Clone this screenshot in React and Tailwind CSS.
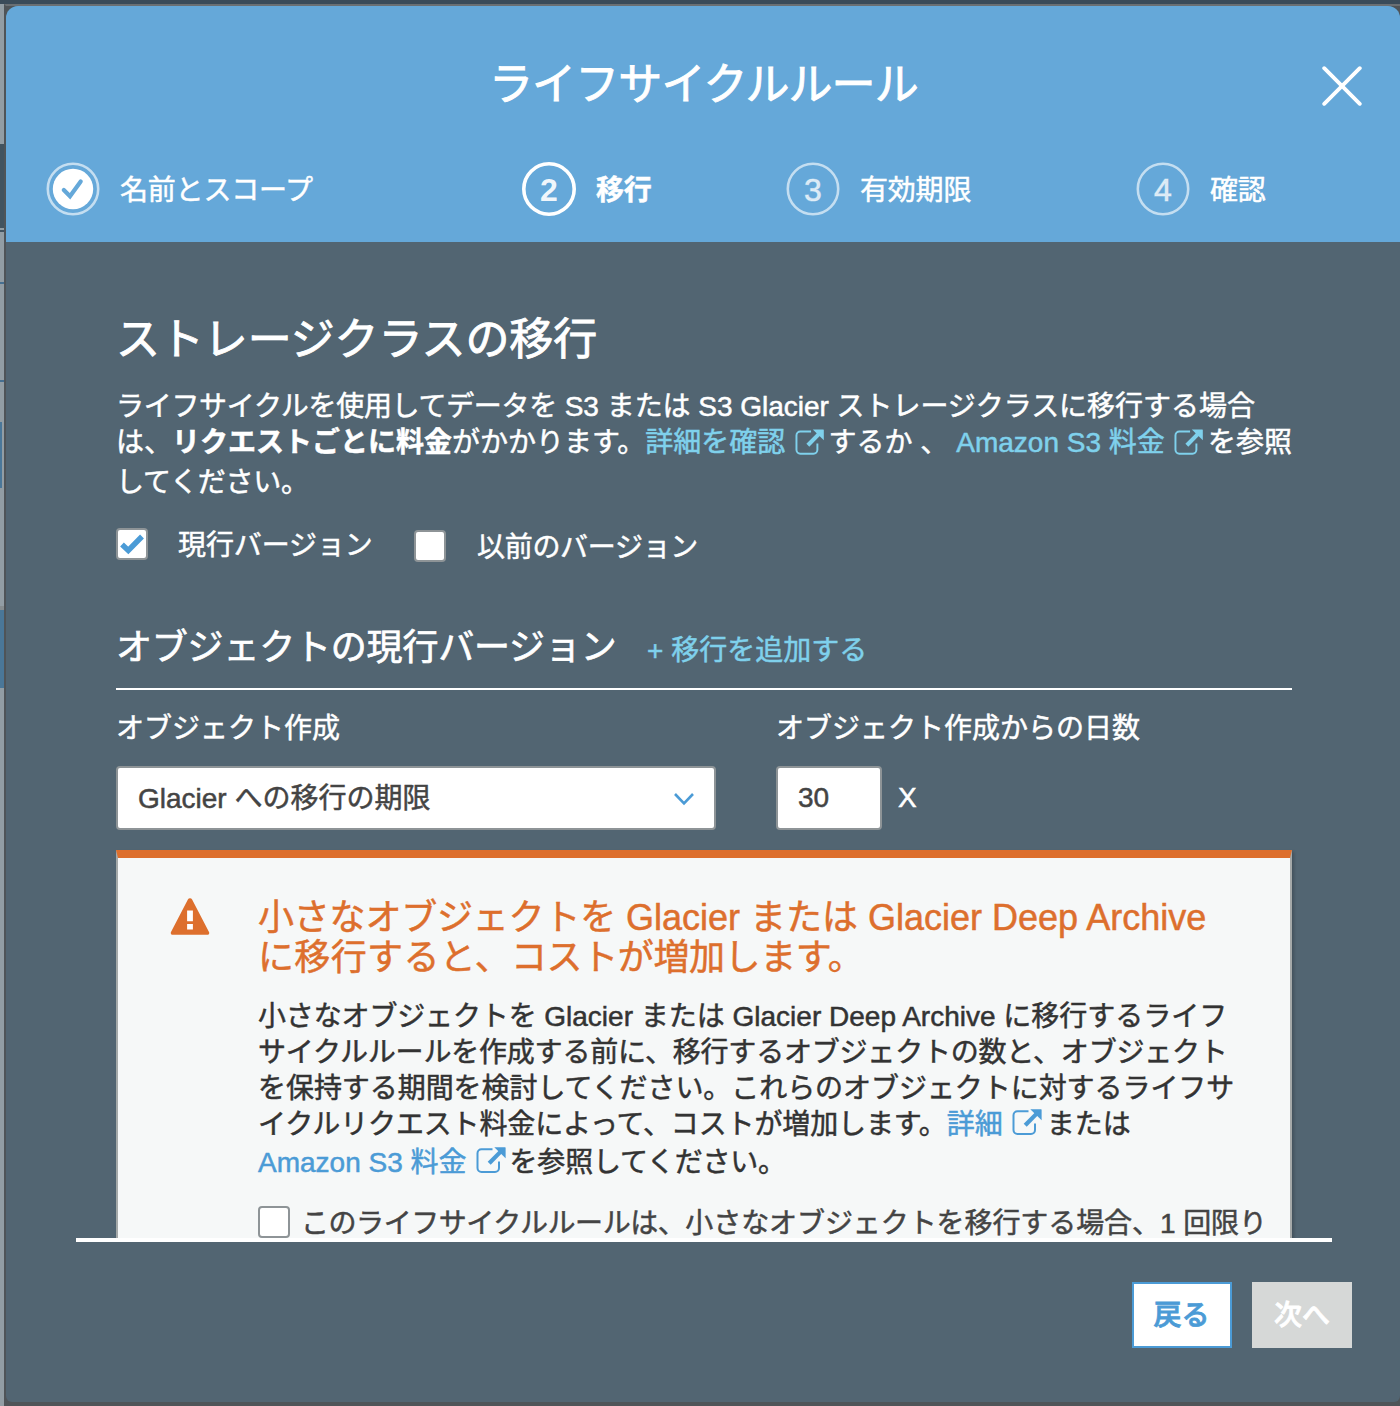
import React from "react";

function ExternalIcon({ className }) {
  return (
    <svg viewBox="0 0 30 28" className={className} fill="none" stroke="currentColor">
      <path d="M16.5 3.3H5.5a4 4 0 0 0-4 4V22a4 4 0 0 0 4 4H19a4 4 0 0 0 4-4v-6.5" strokeWidth="2" />
      <path d="M13.2 17.3 24.7 5.6" strokeWidth="4.2" strokeLinecap="butt" />
      <path d="M18.3 1.2H29a.6.6 0 0 1 .6.6v10.4z" fill="currentColor" stroke="none" />
    </svg>
  );
}

function Step({ number, label, active, done, className }) {
  return (
    <div className={`flex h-[54px] items-center ${className}`}>
      <svg viewBox="0 0 54 54" className="h-[54px] w-[54px] shrink-0">
        <circle cx="27" cy="27" r="25.2" fill="none" stroke="#fff" strokeWidth={active ? 3.6 : 2.6} strokeOpacity={active ? 1 : 0.62} />
        {done ? (
          <>
            <circle cx="27" cy="27" r="20.2" fill="#fff" />
            <path d="M17.8 28l6.2 6.3 10.7-14.8" fill="none" stroke="#65a8d9" strokeWidth="4.2" strokeLinecap="round" />
          </>
        ) : (
          <text
            x="27"
            y="38.9"
            textAnchor="middle"
            fontSize="32"
            fontWeight={active ? 700 : 400}
            fontFamily="'Liberation Sans', sans-serif"
            fill="#fff"
            fillOpacity={active ? 0.92 : 0.75}
            stroke="#fff"
            strokeOpacity={active ? 0 : 0.4}
            strokeWidth="1.1"
          >
            {number}
          </text>
        )}
      </svg>
      <span className={`mt-[3px] ml-5 whitespace-nowrap text-[28px] leading-[54px] tracking-[-0.2px] ${active ? "font-bold" : ""}`}>{label}</span>
    </div>
  );
}

function Backdrop() {
  return (
    <div className="flex w-1 shrink-0 flex-col bg-[#929da4]">
      <div className="mt-[140px] h-[84px] bg-[#42535f]" />
      <div className="mt-[2px] h-[2px] bg-[#42535f]" />
      <div className="mt-[50px] h-[2px] bg-[#466f90]" />
      <div className="mt-[96px] h-[2px] bg-[#466f90]" />
      <div className="mt-[40px] h-[66px] w-[2px] bg-[#4a7799]" />
      <div className="mt-[118px] h-[4px] bg-[#868d90]" />
      <div className="h-[78px] bg-[#4a7798]" />
    </div>
  );
}

export default function App() {
  return (
    <div className="flex h-[1406px] w-[1400px] flex-col overflow-hidden bg-[#5a646b] font-['Liberation_Sans','Noto_Sans_CJK_JP',sans-serif] text-white [-webkit-text-stroke:0.5px]">
      <div className="h-1 shrink-0 bg-[#3a4b59]" />
      <div className="flex min-h-0 flex-1">
        <Backdrop />
        <div className="flex w-[1396px] flex-col border-t-2 border-b-4 border-l-2 border-t-[#6a6f73] border-b-[#4f5458] border-l-[#4f5458] bg-[#4f5458]">
          <div className="flex min-h-0 flex-1 flex-col overflow-hidden rounded-t-[12px] rounded-b-[6px] bg-[#526572]">
            <header className="h-[236px] shrink-0 bg-[#65a8d9]">
              <div className="flex h-[156px] items-center pl-[483px]">
                <h1 className="mt-px w-[833px] whitespace-nowrap text-[44px] leading-[60px] tracking-[-0.9px] [-webkit-text-stroke:0.9px]">ライフサイクルルール</h1>
                <svg viewBox="0 0 40 40" className="mt-1 h-10 w-10" stroke="#fff" strokeWidth="3.8" strokeLinecap="round">
                  <path d="M2.2 2.2l35.6 35.6M37.8 2.2L2.2 37.8" />
                </svg>
              </div>
              <div className="flex">
                <Step done label="名前とスコープ" className="ml-10 w-[476px]" />
                <Step number="2" active label="移行" className="w-[264px]" />
                <Step number="3" label="有効期限" className="w-[350px]" />
                <Step number="4" label="確認" className="" />
              </div>
            </header>

            <main className="h-[996px] shrink-0 overflow-hidden pr-[108px] pl-[110px] pt-[68px]">
              <h2 className="whitespace-nowrap text-[44px] leading-[60px] tracking-[-0.1px] [-webkit-text-stroke:0.9px]">ストレージクラスの移行</h2>
              <div className="mt-[19px] whitespace-nowrap text-[28px]">
                <p className="leading-[36px]">
                  <span className="tracking-[-0.3px]">ライフサイクルを使用してデータを</span>
                  <span className="tracking-[-0.03px]"> S3 または S3 Glacier ストレージクラスに移行する場合</span>
                </p>
                <p className="flex leading-[36px]">
                  <span>は、</span>
                  <b>リクエストごとに料金</b>
                  <span>がかかります。</span>
                  <a className="text-[#7fd1ec]">詳細を確認</a>
                  <ExternalIcon className="mt-[3px] ml-[10px] h-7 w-[30px] text-[#7fd1ec]" />
                  <span className="ml-1">するか 、 </span>
                  <a className="ml-2 text-[#7fd1ec]">Amazon S3 料金</a>
                  <ExternalIcon className="mt-[3px] ml-[9px] h-7 w-[30px] text-[#7fd1ec]" />
                  <span className="ml-[5px]">を参照</span>
                </p>
                <p className="mt-1 leading-[36px] tracking-[-0.2px]">してください。</p>
              </div>

              <div className="mt-[25px] flex h-[40px] items-start whitespace-nowrap text-[28px] leading-[36px]">
                <span className="mt-[2px] flex h-8 w-8 items-center justify-center rounded-[4px] border-2 border-[#8e9497] bg-white">
                  <svg viewBox="0 0 24 22" className="h-[22px] w-6" fill="none" stroke="#4b9bd6" strokeWidth="5.4">
                    <path d="M2 11.5l6.3 6L22 3.5" />
                  </svg>
                </span>
                <span className="mt-[2px] ml-[30px] w-[236px] tracking-[-0.1px]">現行バージョン</span>
                <span className="mt-[4px] h-8 w-8 rounded-[4px] border-2 border-[#8e9497] bg-white" />
                <span className="mt-[4px] ml-[31px] tracking-[-0.3px]">以前のバージョン</span>
              </div>

              <div className="mt-[40px] flex h-[84px] items-start whitespace-nowrap border-b-2 border-white pt-5">
                <h3 className="w-[531px] text-[36px] leading-[44px] tracking-[-0.2px] [-webkit-text-stroke:0.7px]">オブジェクトの現行バージョン</h3>
                <a className="mt-[3px] text-[28px] leading-[44px] text-[#7fd1ec]">+ 移行を追加する</a>
              </div>

              <div className="mt-[19px] flex whitespace-nowrap text-[28px] leading-[40px]">
                <div className="w-[660px]">
                  <div>オブジェクト作成</div>
                  <div className="mt-[17px] flex h-16 w-[600px] items-center justify-between rounded-[4px] border-2 border-[#8e9497] bg-white pr-5 pl-5 text-[#444]">
                    <span className="mt-px">Glacier への移行の期限</span>
                    <svg viewBox="0 0 20 14" className="mt-[2px] h-[14px] w-5" fill="none" stroke="#4b9bd6" strokeWidth="2.6">
                      <path d="M1 2l9 9.4L19 2" />
                    </svg>
                  </div>
                </div>
                <div>
                  <div>オブジェクト作成からの日数</div>
                  <div className="mt-[17px] flex items-center">
                    <div className="flex h-16 w-[106px] items-center rounded-[4px] border-2 border-[#8e9497] bg-white pl-5 text-[#444]">30</div>
                    <span className="ml-4">X</span>
                  </div>
                </div>
              </div>

              <section className="mt-5 flex h-[500px] whitespace-nowrap border-x-2 border-t-8 border-x-[#a5a9a9] border-t-[#dd6f2d] bg-[#f6f8f8] text-[#333] shadow-[2px_2px_3px_rgba(0,0,0,0.2)]">
                <svg viewBox="0 0 40 37" className="mt-10 ml-[52px] h-[37px] w-10 shrink-0">
                  <path d="M17.9 1.6a2.4 2.4 0 0 1 4.2 0L39 34a1.9 1.9 0 0 1-1.7 2.8H2.7A1.9 1.9 0 0 1 1 34z" fill="#dd6f2d" />
                  <path d="M17.1 12.5h5.8v10.8h-5.8zM17.1 26h5.8v5.6h-5.8z" fill="#fff" />
                </svg>
                <div className="ml-12 pt-10">
                  <h4 className="text-[36px] leading-[40px] text-[#dd6f2d]">
                    <span className="block">
                      <span className="tracking-[-0.2px]">小さなオブジェクトを</span> Glacier または Glacier Deep Archive
                    </span>
                    <span className="block">
                      <span className="tracking-[0.35px]">に移行すると、</span>
                      <span className="tracking-[-0.4px]">コストが増加します。</span>
                    </span>
                  </h4>
                  <div className="mt-[21px] text-[28px] leading-[36px]">
                    <p>
                      <span className="tracking-[-0.15px]">小さなオブジェクトを</span> Glacier または Glacier Deep Archive に移行するライフ
                    </p>
                    <p className="tracking-[-0.2px]">サイクルルールを作成する前に、移行するオブジェクトの数と、オブジェクト</p>
                    <p className="tracking-[-0.06px]">を保持する期間を検討してください。これらのオブジェクトに対するライフサ</p>
                    <p className="flex">
                      <span className="tracking-[-0.14px]">イクルリクエスト料金によって、コストが増加します。</span>
                      <a className="text-[#4b9bd6]">詳細</a>
                      <ExternalIcon className="mt-px ml-[9px] h-7 w-[30px] text-[#4b9bd6]" />
                      <span className="ml-[5px]">または</span>
                    </p>
                    <p className="mt-[2px] flex">
                      <a className="text-[#4b9bd6]">Amazon S3 料金</a>
                      <ExternalIcon className="mt-px ml-[9px] h-7 w-[30px] text-[#4b9bd6]" />
                      <span className="ml-1 tracking-[-0.2px]">を参照してください。</span>
                    </p>
                  </div>
                  <div className="mt-6 flex text-[28px] leading-[36px] text-[#444]">
                    <span className="mt-[1px] h-8 w-8 rounded-[4px] border-2 border-[#8e9497] bg-white" />
                    <span className="mt-px ml-[11px]">
                      <span className="tracking-[-0.45px]">このライフサイクルルールは、</span>
                      <span className="tracking-[-0.08px]">小さなオブジェクトを移行する場合、1 回限り</span>
                    </span>
                  </div>
                </div>
              </section>
            </main>

            <footer className="mx-[70px] w-[1256px] border-t-4 border-white">
              <div className="mt-10 -mr-5 flex justify-end gap-5 text-[28px] font-medium leading-[64px] [-webkit-text-stroke:0.8px]">
                <button className="h-[66px] w-[100px] whitespace-nowrap border-2 border-[#4b9bd6] bg-white pr-px text-[#4b9bd6]">戻る</button>
                <button className="h-[66px] w-[100px] whitespace-nowrap border-2 border-[#d6d8d7] bg-[#d6d8d7]">次へ</button>
              </div>
            </footer>
          </div>
        </div>
      </div>
    </div>
  );
}
